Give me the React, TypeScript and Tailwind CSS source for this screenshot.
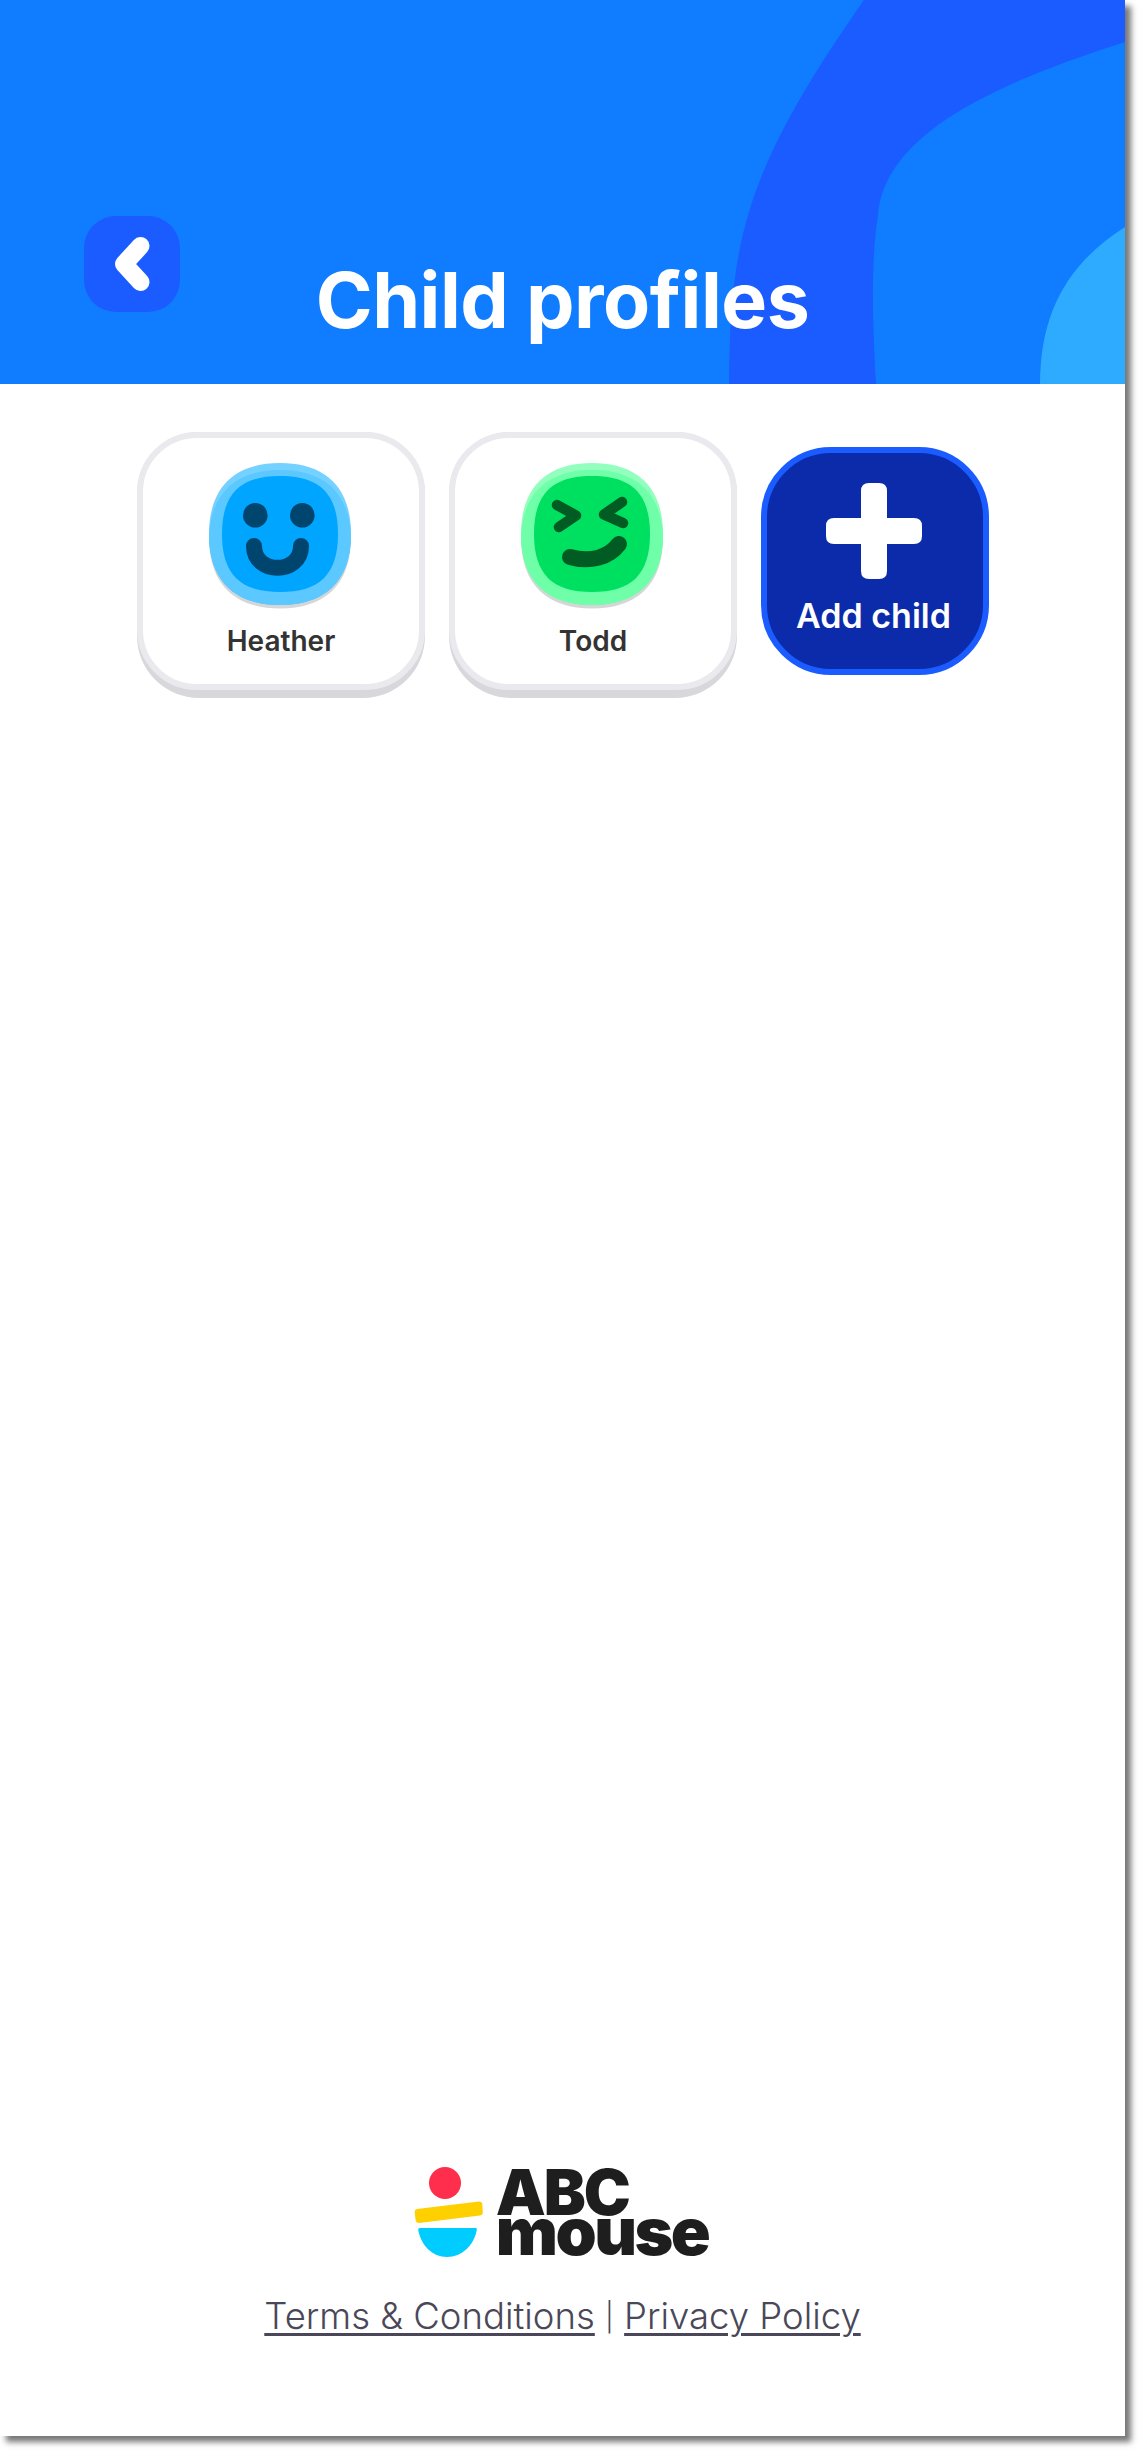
import React from "react";

const FONT = "font-['Inter',sans-serif]";

const HeaderBlobs: React.FC = () => (
  <svg className="absolute inset-0 h-full w-full" viewBox="0 0 1125 384" aria-hidden="true">
    <path
      d="M864 0 L1125 0 L1125 42 C990 85 885 135 878 215 C870 265 873 330 876 384 L729 384 C730 240 745 170 864 0 Z"
      fill="#1a5cff"
    />
    <path d="M1125 227 C1070 262 1040 310 1040 384 L1125 384 Z" fill="#2eabff" />
  </svg>
);

const OUTER = "M71 0 C114 0 142 22 142 71 C142 120 114 142 71 142 C28 142 0 120 0 71 C0 22 28 0 71 0 Z";
const INNER = "M71 13 C110 13 129 30 129 71 C129 112 110 129 71 129 C32 129 13 112 13 71 C13 30 32 13 71 13 Z";

const Squircle: React.FC<{ id: string; top: string; mid: string; face: string; children: React.ReactNode }> = ({
  id,
  top,
  mid,
  face,
  children,
}) => (
  <svg className="mr-[2px]" width="142" height="146" viewBox="0 0 142 146" aria-hidden="true">
    <defs>
      <clipPath id={id}>
        <path d={OUTER} />
      </clipPath>
    </defs>
    <path d={OUTER} fill="#d6d6d8" transform="translate(0 3.5)" />
    <path d={OUTER} fill={top} />
    <g clipPath={`url(#${id})`}>
      <path d={OUTER} fill={mid} transform="translate(0 7)" />
      <rect x="0" y="71" width="142" height="71" fill={mid} />
    </g>
    <path d={INNER} fill={face} />
    {children}
  </svg>
);

const HappyFace = () => (
  <Squircle id="clip-heather" top="#75d1ff" mid="#5bc8ff" face="#00a5ff">
    <circle cx="46.3" cy="52.3" r="12.3" fill="#00456e" />
    <circle cx="93.3" cy="52.3" r="12.3" fill="#00456e" />
    <path d="M45 83 C45 112 92 112 92 83" fill="none" stroke="#00456e" strokeWidth="16" strokeLinecap="round" />
  </Squircle>
);

const WinkFace = () => (
  <Squircle id="clip-todd" top="#92ffbe" mid="#6effa8" face="#00e060">
    <g fill="none" stroke="#005c22" strokeLinecap="round" strokeLinejoin="round">
      <path d="M36 42 L55 52.5 L38 64" strokeWidth="10.5" />
      <path d="M101 39 L83 51.5 L102 60" strokeWidth="10.5" />
      <path d="M49 94 C70 100 88 94 98 81" strokeWidth="16" />
    </g>
  </Squircle>
);

const ProfileCard: React.FC<{ name: string; children: React.ReactNode }> = ({ name, children }) => (
  <div className="flex h-[266px] w-[288px] flex-col items-center rounded-[62px] bg-[#d8d8dc] pb-[8px]">
    <div className="flex h-[258px] w-full flex-col items-center rounded-[60px] border-[6px] border-[#e9e9ee] bg-white pt-[25px]">
      {children}
      <span className={`${FONT} mt-[15px] text-[28px] font-semibold leading-[34px] text-[#333333]`}>{name}</span>
    </div>
  </div>
);

const Logo = () => (
  <div className="mr-[3px] flex items-start gap-[12px]">
    <svg width="70" height="90" viewBox="0 0 70 90" aria-hidden="true">
      <circle cx="31" cy="16" r="16" fill="#ff2e4c" />
      <path d="M3 42 L65 34.5 Q68 34.5 68.3 37 L68.8 46 Q68.8 48 66 48.5 L5 56 Q2 56 1.6 53 L0.6 45 Q0.6 42.5 3 42 Z" fill="#ffd000" />
      <path d="M6 61 L62 61 Q63 61 62.8 63 C60 78 48 90 33 90 C18 90 7 78 4.2 63 Q4 61 6 61 Z" fill="#00ccff" />
    </svg>
    <div className="flex flex-col items-start font-['Inter',sans-serif] font-black text-[#1e1e1e]">
      <span className="h-[44px] text-[63px] leading-[50px] tracking-[-2px]">ABC</span>
      <span className="h-[42px] text-[66px] leading-[40px] tracking-[-2.5px]">mouse</span>
    </div>
  </div>
);

export default function App() {
  return (
    <div className="h-[2454px] w-[1143px] bg-white">
      <div className="flex h-[2436px] w-[1125px] flex-col bg-white shadow-[6px_6px_6px_#777777]">
        <header className="relative flex h-[384px] shrink-0 items-end overflow-hidden bg-[#107cff]">
          <HeaderBlobs />
          <button className="absolute left-[84px] top-[216px] flex h-[96px] w-[96px] items-center justify-center rounded-[32px] bg-[#1a5cff]">
            <svg width="96" height="96" viewBox="0 0 96 96" aria-hidden="true">
              <path
                d="M56.5 30 L40 48 L56.5 66"
                fill="none"
                stroke="white"
                strokeWidth="18"
                strokeLinecap="round"
                strokeLinejoin="round"
              />
            </svg>
          </button>
          <h1 className={`${FONT} relative w-full pb-[36px] text-center text-[77px] font-bold leading-[96px] tracking-[-0.5px] text-white`}>
            Child profiles
          </h1>
        </header>

        <main className="flex flex-1 flex-col">
          <div className="flex items-center justify-center gap-[24px] pt-[48px] pl-[1px]">
            <ProfileCard name="Heather">
              <HappyFace />
            </ProfileCard>
            <ProfileCard name="Todd">
              <WinkFace />
            </ProfileCard>
            <button className="mb-[8px] flex h-[228px] w-[228px] flex-col items-center rounded-[70px] border-[6px] border-[#1a5cff] bg-[#0c2bab] pt-[30px] pr-[3px]">
              <svg width="96" height="96" viewBox="0 0 96 96" aria-hidden="true">
                <path
                  d="M43 0 H53 Q61 0 61 8 V35 H88 Q96 35 96 43 V53 Q96 61 88 61 H61 V88 Q61 96 53 96 H43 Q35 96 35 88 V61 H8 Q0 61 0 53 V43 Q0 35 8 35 H35 V8 Q35 0 43 0 Z"
                  fill="white"
                />
              </svg>
              <span className={`${FONT} mt-[17px] text-[34px] font-semibold leading-[40px] text-white`}>Add child</span>
            </button>
          </div>

          <footer className="mt-auto flex flex-col items-center pb-[97px]">
            <Logo />
            <p className={`${FONT} mt-[37px] text-[36.5px] font-light leading-[44px] text-[#4a4858]`}>
              <a className="underline decoration-[3px] underline-offset-[4px]" href="#">
                Terms &amp; Conditions
              </a>{" "}
              <span className="align-[2px] text-[28px]">|</span>{" "}
              <a className="underline decoration-[3px] underline-offset-[4px]" href="#">
                Privacy Policy
              </a>
            </p>
          </footer>
        </main>
      </div>
    </div>
  );
}
